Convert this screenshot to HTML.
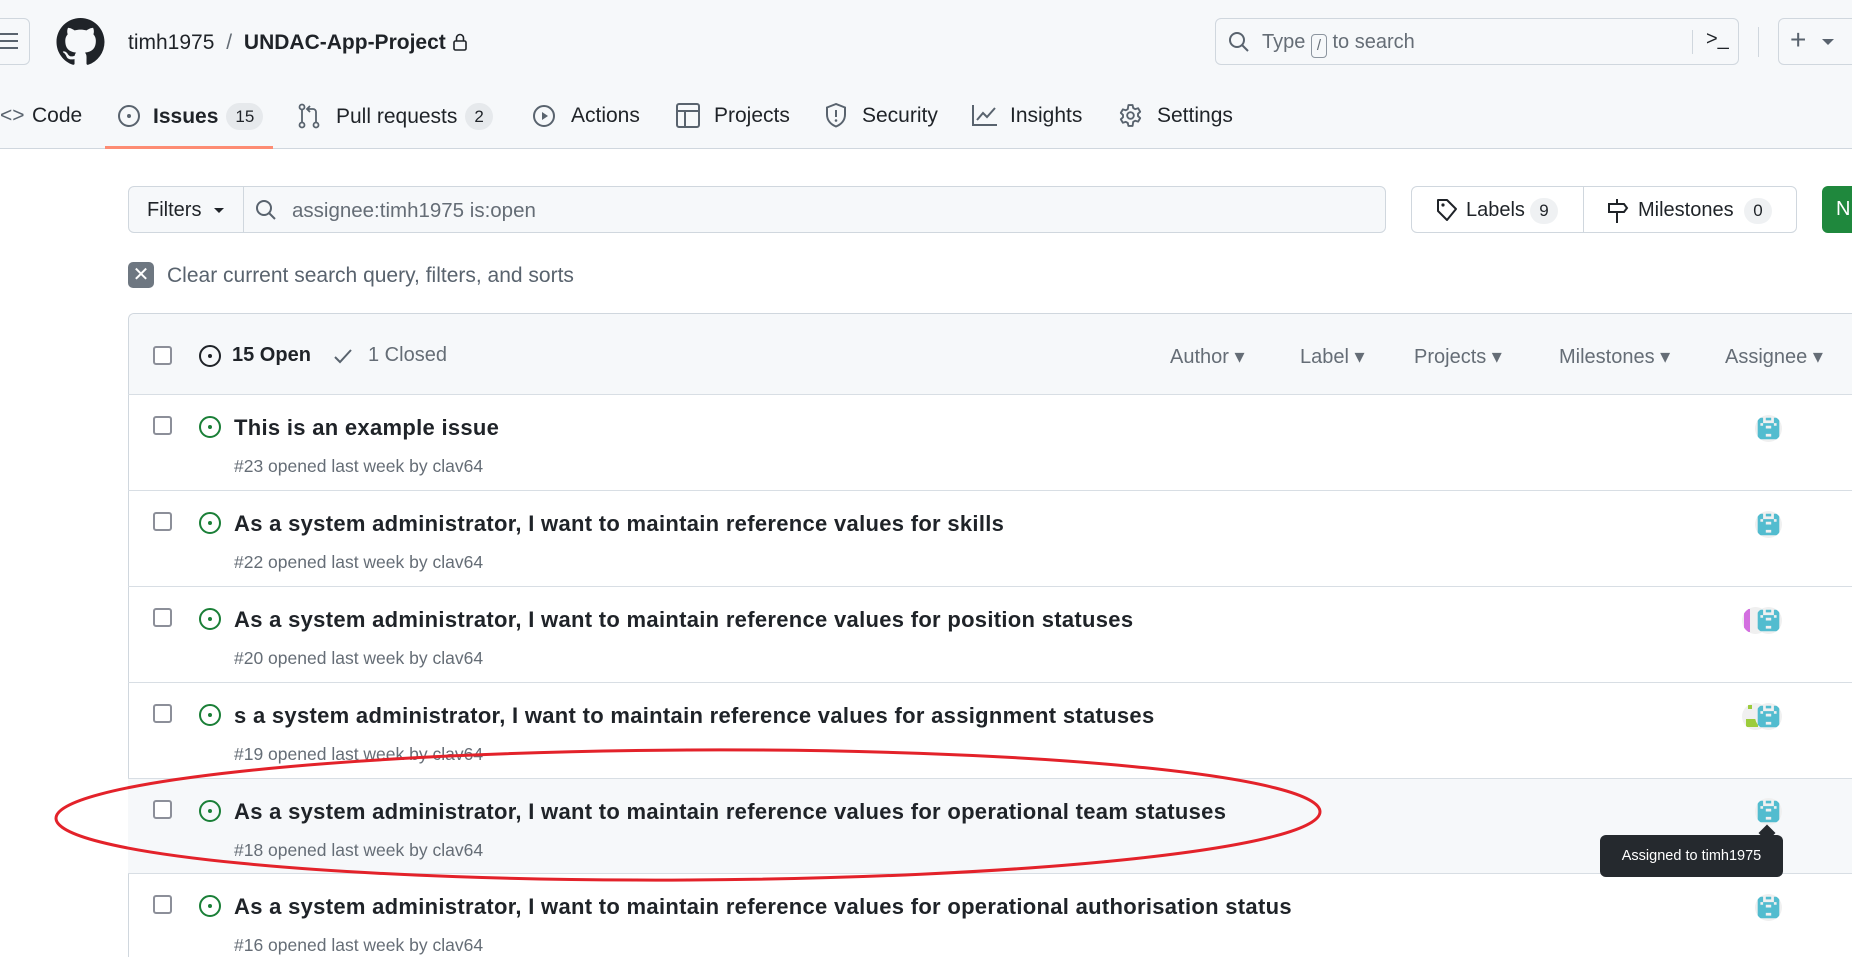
<!DOCTYPE html>
<html style="width:1852px;height:957px;overflow:hidden"><head><meta charset="utf-8"><style>
*{box-sizing:border-box;margin:0;padding:0}
body{width:1852px;height:957px;overflow:hidden;background:#fff;font-family:"Liberation Sans",sans-serif;color:#1f2328;position:relative}
.abs{position:absolute}
.top{position:absolute;left:0;top:0;width:1852px;height:149px;background:#f6f8fa;border-bottom:1px solid #d0d7de}
.nav{position:absolute;top:103px;font-size:21px;color:#1f2328;white-space:nowrap;line-height:26px}
.badge{display:inline-block;background:#e6e9ec;border-radius:14px;font-size:17px;padding:0 9px;line-height:27px;margin-left:8px;vertical-align:1px}
svg{display:block}
.row{position:absolute;left:128px;width:1730px;height:96px;border-top:1px solid #d8dee4}
.cb{position:absolute;width:19px;height:19px;border:2px solid #8c8f99;border-radius:3px;background:#fff}
.title{position:absolute;left:106px;top:20px;font-size:22px;font-weight:bold;letter-spacing:0.3px;white-space:nowrap}
.sub{position:absolute;left:106px;top:61px;font-size:17.5px;color:#656d76;white-space:nowrap}
.fl{position:absolute;top:344px;font-size:20px;color:#656d76}
</style></head><body>
<div class="top"></div>
<div class="abs" style="left:-10px;top:18px;width:40px;height:47px;border:1px solid #d0d7de;border-radius:6px;background:#f6f8fa"></div>
<div class="abs" style="left:0;top:33px;width:18px;height:2px;background:#59636e;box-shadow:0 7px 0 #59636e,0 14px 0 #59636e"></div>
<svg class="abs" style="left:56px;top:18px" width="49" height="48" viewBox="0 0 16 16"><path fill="#1f2328" d="M8 0C3.58 0 0 3.58 0 8c0 3.54 2.29 6.53 5.47 7.59.4.07.55-.17.55-.38 0-.19-.01-.82-.01-1.49-2.01.37-2.53-.49-2.69-.94-.09-.23-.48-.94-.82-1.13-.28-.15-.68-.52-.01-.53.63-.01 1.08.58 1.23.82.72 1.21 1.87.87 2.33.66.07-.52.28-.87.51-1.07-1.78-.2-3.64-.89-3.64-3.95 0-.87.31-1.59.82-2.15-.08-.2-.36-1.02.08-2.12 0 0 .67-.21 2.2.82.64-.18 1.32-.27 2-.27.68 0 1.36.09 2 .27 1.53-1.04 2.2-.82 2.2-.82.44 1.1.16 1.92.08 2.12.51.56.82 1.27.82 2.15 0 3.07-1.87 3.75-3.65 3.95.29.25.54.73.54 1.48 0 1.07-.01 1.93-.01 2.2 0 .21.15.46.55.38A8.013 8.013 0 0016 8c0-4.42-3.58-8-8-8z"/></svg>
<div class="abs" style="left:128px;top:31px;font-size:21px;white-space:nowrap">timh1975 <span style="color:#656d76;margin:0 6px">/</span> <b style="font-weight:600">UNDAC-App-Project</b></div>
<svg class="abs" style="left:452px;top:33px" width="16" height="18" viewBox="0 0 16 18"><rect x="2" y="8" width="12" height="9" rx="1.5" fill="none" stroke="#1f2328" stroke-width="1.6"/><path d="M4.5 8V5a3.5 3.5 0 017 0v3" fill="none" stroke="#1f2328" stroke-width="1.6"/></svg>
<div class="abs" style="left:1215px;top:18px;width:524px;height:47px;border:1px solid #d0d7de;border-radius:6px;background:#f6f8fa"></div>
<svg class="abs" style="left:1228px;top:31px" width="22" height="22" viewBox="0 0 22 22"><circle cx="9" cy="9" r="7" fill="none" stroke="#59636e" stroke-width="2"/><path d="M14 14l6 6" stroke="#59636e" stroke-width="2"/></svg>
<div class="abs" style="left:1262px;top:31px;font-size:20px;color:#656d76;white-space:nowrap">Type <span style="display:inline-block;border:1px solid #8c959f;border-radius:4px;width:16px;height:24px;text-align:center;font-size:15px;line-height:22px;vertical-align:-2px">/</span> to search</div>
<div class="abs" style="left:1692px;top:30px;width:1px;height:24px;background:#d0d7de"></div>
<div class="abs" style="left:1706px;top:28px;font-size:20px;color:#1f2328">&gt;_</div>
<div class="abs" style="left:1758px;top:27px;width:1px;height:30px;background:#d0d7de"></div>
<div class="abs" style="left:1778px;top:18px;width:90px;height:47px;border:1px solid #d0d7de;border-radius:6px;background:#f6f8fa"></div>
<div class="abs" style="left:1790px;top:24px;font-size:28px;color:#59636e">+</div>
<div class="abs" style="left:1822px;top:39px;border:6px solid transparent;border-top-color:#59636e;border-bottom:0"></div>
<div class="nav" style="left:0"><span style="color:#59636e">&lt;&gt;</span></div>
<div class="nav" style="left:32px">Code</div>
<svg class="abs" style="left:117px;top:104px" width="24" height="24" viewBox="0 0 24 24"><circle cx="12" cy="12" r="10" fill="none" stroke="#59636e" stroke-width="2"/><circle cx="12" cy="12" r="2" fill="#59636e"/></svg>
<div class="nav" style="left:153px;font-weight:600">Issues<span class="badge" style="font-weight:normal">15</span></div>
<div class="abs" style="left:105px;top:146px;width:168px;height:3px;background:#fd8c73"></div>
<svg class="abs" style="left:297px;top:103px" width="24" height="26" viewBox="0 0 24 26"><circle cx="5" cy="4" r="2.5" fill="none" stroke="#59636e" stroke-width="1.8"/><circle cx="5" cy="22" r="2.5" fill="none" stroke="#59636e" stroke-width="1.8"/><circle cx="19" cy="22" r="2.5" fill="none" stroke="#59636e" stroke-width="1.8"/><path d="M5 7v12M19 19V9a3 3 0 00-3-3h-5M13 3l-3 3 3 3" fill="none" stroke="#59636e" stroke-width="1.8"/></svg>
<div class="nav" style="left:336px">Pull requests<span class="badge">2</span></div>
<svg class="abs" style="left:532px;top:104px" width="24" height="24" viewBox="0 0 24 24"><circle cx="12" cy="12" r="10" fill="none" stroke="#59636e" stroke-width="2"/><path d="M10 8v8l6-4z" fill="#59636e"/></svg>
<div class="nav" style="left:571px">Actions</div>
<svg class="abs" style="left:676px;top:103px" width="24" height="25" viewBox="0 0 24 25"><rect x="1" y="1" width="22" height="23" rx="2" fill="none" stroke="#59636e" stroke-width="2"/><path d="M1 8h22M9 8v16" stroke="#59636e" stroke-width="2"/></svg>
<div class="nav" style="left:714px">Projects</div>
<svg class="abs" style="left:825px;top:103px" width="22" height="25" viewBox="0 0 22 25"><path d="M11 1L2 4.5v7c0 6 4 10 9 12 5-2 9-6 9-12v-7z" fill="none" stroke="#59636e" stroke-width="2"/><path d="M11 7v7" stroke="#59636e" stroke-width="2"/><circle cx="11" cy="17.5" r="1.3" fill="#59636e"/></svg>
<div class="nav" style="left:862px">Security</div>
<svg class="abs" style="left:972px;top:104px" width="26" height="22" viewBox="0 0 26 22"><path d="M1 1v20h24" fill="none" stroke="#59636e" stroke-width="2"/><path d="M5 16l6-7 4 4 8-9" fill="none" stroke="#59636e" stroke-width="2"/></svg>
<div class="nav" style="left:1010px">Insights</div>
<svg class="abs" style="left:1118px;top:103px" width="25" height="25" viewBox="0 0 24 24"><g fill="none" stroke="#59636e" stroke-width="1.8" stroke-linejoin="round"><path d="M10 2h4l.6 2.8 2 1.1 2.7-.9 2 3.4-2.1 1.9v2.3l2.1 1.9-2 3.4-2.7-.9-2 1.1L14 22h-4l-.6-2.8-2-1.1-2.7.9-2-3.4 2.1-1.9v-2.3L2.7 9.5l2-3.4 2.7.9 2-1.1z"/><circle cx="12" cy="12" r="3.2"/></g></svg>
<div class="nav" style="left:1157px">Settings</div>
<div class="abs" style="left:128px;top:186px;width:1258px;height:47px;border:1px solid #d0d7de;border-radius:6px;background:#f6f8fa"></div>
<div class="abs" style="left:243px;top:186px;width:1px;height:47px;background:#d0d7de"></div>
<div class="abs" style="left:147px;top:199px;font-size:20px">Filters</div>
<div class="abs" style="left:214px;top:208px;border:5px solid transparent;border-top-color:#1f2328;border-bottom:0"></div>
<svg class="abs" style="left:255px;top:199px" width="22" height="22" viewBox="0 0 22 22"><circle cx="9" cy="9" r="7" fill="none" stroke="#59636e" stroke-width="2"/><path d="M14 14l6 6" stroke="#59636e" stroke-width="2"/></svg>
<div class="abs" style="left:292px;top:199px;font-size:20.5px;color:#656d76">assignee:timh1975 is:open</div>
<div class="abs" style="left:1411px;top:186px;width:386px;height:47px;border:1px solid #d0d7de;border-radius:6px;background:#fff"></div>
<div class="abs" style="left:1583px;top:186px;width:1px;height:47px;background:#d0d7de"></div>
<svg class="abs" style="left:1436px;top:198px" width="22" height="24" viewBox="0 0 22 24"><path d="M2 2h9l9 9-9 11-9-9z" fill="none" stroke="#1f2328" stroke-width="2" stroke-linejoin="round"/><circle cx="7" cy="7" r="1.6" fill="#1f2328"/></svg>
<div class="abs" style="left:1466px;top:199px;font-size:20px">Labels</div>
<div class="abs" style="left:1530px;top:198px;width:28px;height:26px;border-radius:13px;background:#eff1f3;font-size:17px;text-align:center;line-height:26px">9</div>
<svg class="abs" style="left:1607px;top:198px" width="22" height="26" viewBox="0 0 22 26"><path d="M2 6h15l3 4-3 4H2z" fill="none" stroke="#1f2328" stroke-width="2"/><path d="M10 1v5M10 14v11" stroke="#1f2328" stroke-width="2"/></svg>
<div class="abs" style="left:1638px;top:199px;font-size:20px">Milestones</div>
<div class="abs" style="left:1744px;top:198px;width:28px;height:26px;border-radius:13px;background:#eff1f3;font-size:17px;text-align:center;line-height:26px">0</div>
<div class="abs" style="left:1822px;top:186px;width:30px;height:47px;border-radius:6px 0 0 6px;background:#1f883d;color:#fff;font-size:20px;padding:12px 0 0 14px;overflow:hidden">N</div>
<div class="abs" style="left:128px;top:262px;width:26px;height:26px;border-radius:5px;background:#6e7781;color:#fff;font-size:20px;text-align:center;line-height:26px">✕</div>
<div class="abs" style="left:167px;top:264px;font-size:21px;color:#59636e;white-space:nowrap">Clear current search query, filters, and sorts</div>
<div class="abs" style="left:128px;top:313px;width:1724px;height:644px;border:1px solid #d0d7de;border-right:0;border-bottom:0;border-radius:6px 0 0 0"></div>
<div class="abs" style="left:129px;top:314px;width:1723px;height:80px;background:#f6f8fa;border-radius:6px 0 0 0"></div>
<div class="cb" style="left:153px;top:346px"></div>
<svg class="abs" style="left:198px;top:344px" width="24" height="24" viewBox="0 0 24 24"><circle cx="12" cy="12" r="10" fill="none" stroke="#1f2328" stroke-width="2"/><circle cx="12" cy="12" r="2" fill="#1f2328"/></svg>
<div class="abs" style="left:232px;top:344px;font-size:20px;font-weight:bold">15 Open</div>
<svg class="abs" style="left:333px;top:347px" width="20" height="18" viewBox="0 0 20 18"><path d="M2 10l5 5L18 3" fill="none" stroke="#59636e" stroke-width="2"/></svg>
<div class="abs" style="left:368px;top:344px;font-size:20px;color:#656d76">1 Closed</div>
<div class="fl" style="left:1170px">Author ▾</div>
<div class="fl" style="left:1300px">Label ▾</div>
<div class="fl" style="left:1414px">Projects ▾</div>
<div class="fl" style="left:1559px">Milestones ▾</div>
<div class="fl" style="left:1725px">Assignee ▾</div>

<div class="row" style="top:394px"><div class="cb" style="left:25px;top:21px"></div><svg class="abs" style="left:70px;top:20px" width="24" height="24" viewBox="0 0 24 24"><circle cx="12" cy="12" r="10" fill="none" stroke="#1a7f37" stroke-width="2"/><circle cx="12" cy="12" r="2" fill="#1a7f37"/></svg><div class="title">This is an example issue</div><div class="sub">#23 opened last week by clav64</div></div>
<div class="row" style="top:490px"><div class="cb" style="left:25px;top:21px"></div><svg class="abs" style="left:70px;top:20px" width="24" height="24" viewBox="0 0 24 24"><circle cx="12" cy="12" r="10" fill="none" stroke="#1a7f37" stroke-width="2"/><circle cx="12" cy="12" r="2" fill="#1a7f37"/></svg><div class="title">As a system administrator, I want to maintain reference values for skills</div><div class="sub">#22 opened last week by clav64</div></div>
<div class="row" style="top:586px"><div class="cb" style="left:25px;top:21px"></div><svg class="abs" style="left:70px;top:20px" width="24" height="24" viewBox="0 0 24 24"><circle cx="12" cy="12" r="10" fill="none" stroke="#1a7f37" stroke-width="2"/><circle cx="12" cy="12" r="2" fill="#1a7f37"/></svg><div class="title">As a system administrator, I want to maintain reference values for position statuses</div><div class="sub">#20 opened last week by clav64</div></div>
<div class="row" style="top:682px"><div class="cb" style="left:25px;top:21px"></div><svg class="abs" style="left:70px;top:20px" width="24" height="24" viewBox="0 0 24 24"><circle cx="12" cy="12" r="10" fill="none" stroke="#1a7f37" stroke-width="2"/><circle cx="12" cy="12" r="2" fill="#1a7f37"/></svg><div class="title">s a system administrator, I want to maintain reference values for assignment statuses</div><div class="sub">#19 opened last week by clav64</div></div>
<div class="row" style="top:778px;background:#f6f8fa"><div class="cb" style="left:25px;top:21px"></div><svg class="abs" style="left:70px;top:20px" width="24" height="24" viewBox="0 0 24 24"><circle cx="12" cy="12" r="10" fill="none" stroke="#1a7f37" stroke-width="2"/><circle cx="12" cy="12" r="2" fill="#1a7f37"/></svg><div class="title">As a system administrator, I want to maintain reference values for operational team statuses</div><div class="sub">#18 opened last week by clav64</div></div>
<div class="row" style="top:873px;height:84px"><div class="cb" style="left:25px;top:21px"></div><svg class="abs" style="left:70px;top:20px" width="24" height="24" viewBox="0 0 24 24"><circle cx="12" cy="12" r="10" fill="none" stroke="#1a7f37" stroke-width="2"/><circle cx="12" cy="12" r="2" fill="#1a7f37"/></svg><div class="title">As a system administrator, I want to maintain reference values for operational authorisation status</div><div class="sub">#16 opened last week by clav64</div></div>

<svg width="0" height="0" style="position:absolute"><defs><symbol id="av" viewBox="0 0 10 10"><clipPath id="cc"><circle cx="5" cy="5" r="5"/></clipPath><g clip-path="url(#cc)"><rect width="10" height="10" fill="#f0f0f0"/><path fill="#52bccf" d="M1 1h2v2H1zM4 1h2v1H4zM7 1h2v2H7zM1 3h1v6H1zM3 3h4v1H3zM8 3h1v6H8zM2 4h2v2H2zM6 4h2v2H6zM4 5h2v1H4zM2 6h6v1H2zM2 7h2v2H2zM6 7h2v2H6zM4 8h2v1H4z"/></g></symbol></defs></svg>
<svg class="abs" style="left:1755px;top:415px" width="27" height="27"><use href="#av"/></svg>
<svg class="abs" style="left:1755px;top:511px" width="27" height="27"><use href="#av"/></svg>
<div class="abs" style="left:1742px;top:607px;width:27px;height:27px;border-radius:50%;background:#f0f0f0;overflow:hidden"><div style="position:absolute;left:2px;top:2px;width:6px;height:23px;background:#d36fe0"></div></div>
<svg class="abs" style="left:1755px;top:607px" width="27" height="27"><use href="#av"/></svg>
<div class="abs" style="left:1742px;top:703px;width:27px;height:27px;border-radius:50%;background:#f0f0f0;overflow:hidden"><div style="position:absolute;left:4px;top:16px;width:12px;height:8px;background:#9ccc3c"></div><div style="position:absolute;left:6px;top:2px;width:4px;height:4px;background:#9ccc3c"></div></div>
<svg class="abs" style="left:1755px;top:703px" width="27" height="27"><use href="#av"/></svg>
<svg class="abs" style="left:1755px;top:798px" width="27" height="27"><use href="#av"/></svg>
<svg class="abs" style="left:1755px;top:894px" width="27" height="27"><use href="#av"/></svg>
<div class="abs" style="left:1761px;top:827px;width:12px;height:12px;background:#25292e;transform:rotate(45deg)"></div>
<div class="abs" style="left:1600px;top:835px;width:183px;height:42px;background:#25292e;border-radius:6px;color:#fff;font-size:14.5px;text-align:center;line-height:42px">Assigned to timh1975</div>
<svg class="abs" style="left:0;top:0;pointer-events:none" width="1852" height="957"><ellipse cx="688" cy="815" rx="632" ry="65" fill="none" stroke="#e3222a" stroke-width="3" transform="rotate(-0.3 688 815)"/></svg>
</body></html>
